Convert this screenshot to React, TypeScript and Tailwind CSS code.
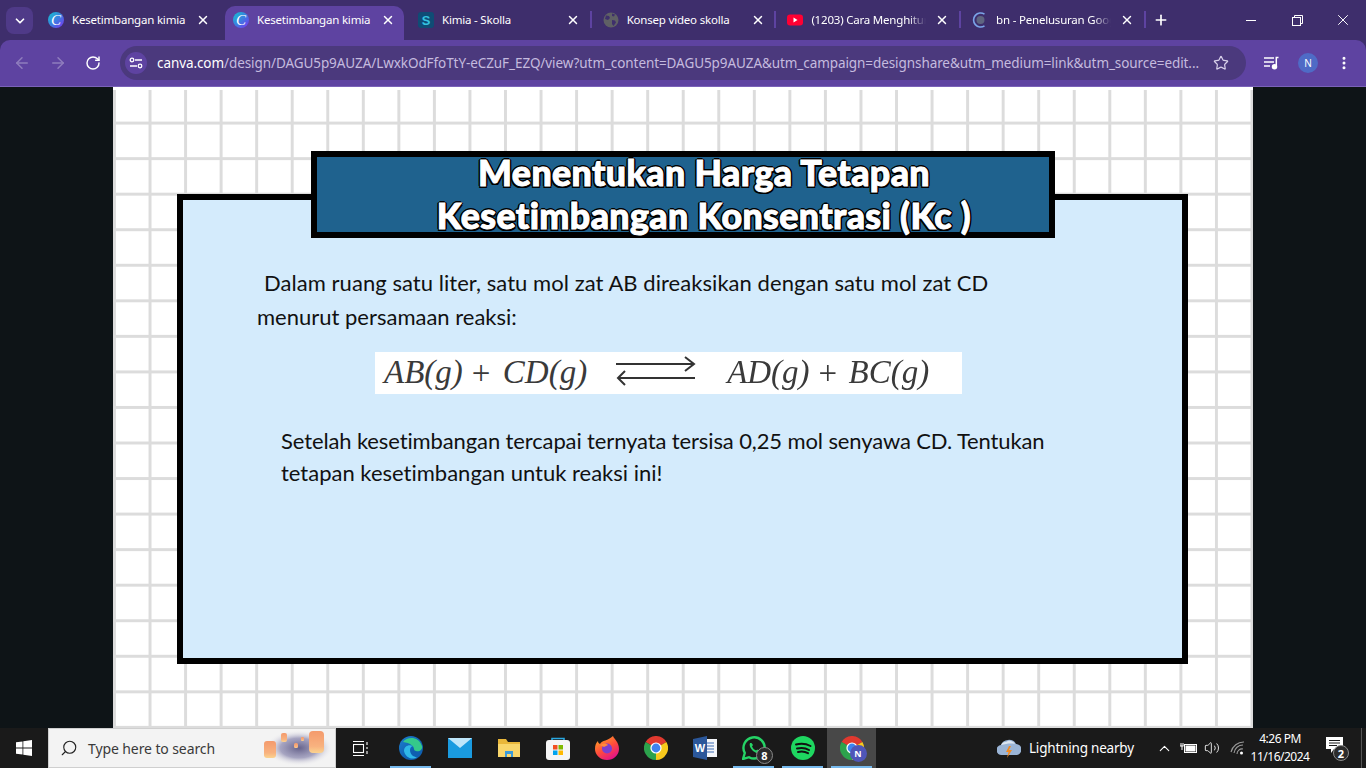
import React from "react";
import {
  ArrowLeft,
  ArrowRight,
  ChevronDown,
  ChevronUp,
  EllipsisVertical,
  Plus,
  RotateCw,
  Search,
  Star,
  Volume2,
  X,
} from "lucide-react";

const CanvaIcon = () => (
  <div className="w-4 h-4 rounded-full bg-[linear-gradient(135deg,#12c5cf,#3b7fe0_50%,#7b2ff0)] flex items-center justify-center text-white text-[15px] leading-none italic font-['Liberation_Serif',serif]">
    C
  </div>
);

const SkollaIcon = () => (
  <div className="w-4 h-4 rounded-[3px] bg-[#0f4c75] flex items-center justify-center text-[#35c3e0] text-[13px] leading-none font-bold font-['Liberation_Sans',sans-serif]">
    S
  </div>
);

const GlobeIcon = () => (
  <svg width="16" height="16" viewBox="0 0 16 16">
    <circle cx="8" cy="8" r="7.5" fill="#5f6065" />
    <path d="M3 3.5l3 .5 1 2-2 2-3-1zM9 8l3 .5 1 2-2.5 3.5-1.5-2zM9 1.5l3 1-1 2-2-.5z" fill="#3e2f6c" />
  </svg>
);

const YoutubeIcon = () => (
  <svg width="16" height="16" viewBox="0 0 16 16">
    <rect x="0" y="2.5" width="16" height="11" rx="3" fill="#ff0033" />
    <path d="M6.5 5.5l4 2.5-4 2.5z" fill="#fff" />
  </svg>
);

const LoadingGlobeIcon = () => (
  <svg width="16" height="16" viewBox="0 0 16 16" fill="none">
    <path d="M12.5 2.2A7 7 0 1 0 12.5 13.8" stroke="#7ba4e8" strokeWidth="1.6" />
    <circle cx="8.5" cy="8" r="4" fill="#5f6580" />
  </svg>
);

const tabs = [
  { title: "Kesetimbangan kimia", icon: <CanvaIcon />, kind: "first", sep: false, fade: false },
  { title: "Kesetimbangan kimia", icon: <CanvaIcon />, kind: "active", sep: false, fade: false },
  { title: "Kimia - Skolla", icon: <SkollaIcon />, kind: "normal", sep: true, fade: false },
  { title: "Konsep video skolla", icon: <GlobeIcon />, kind: "normal", sep: true, fade: false },
  { title: "(1203) Cara Menghitung", icon: <YoutubeIcon />, kind: "normal", sep: true, fade: true },
  { title: "bn - Penelusuran Google", icon: <LoadingGlobeIcon />, kind: "normal", sep: true, fade: true },
];

const TabBar = () => (
  <div className="h-10 bg-[#3e2e6c] flex items-end shrink-0">
    <div className="w-[27px] h-[27px] ml-[6px] mb-[6px] rounded-lg bg-[#4f3a88] flex items-center justify-center shrink-0">
      <ChevronDown size={14} strokeWidth={3} className="text-white" />
    </div>
    <div className="flex ml-[2px] h-[34px]">
      {tabs.map((tab, i) => (
        <div
          key={i}
          className={
            tab.kind === "active"
              ? "w-[179px] pl-2 pb-[6px] bg-[#5e43a1] rounded-t-[10px] flex items-center relative shrink-0"
              : tab.kind === "first"
                ? "w-[190px] pl-[13px] pb-[6px] flex items-center relative shrink-0"
                : "w-[184.7px] pl-[14px] pb-[6px] flex items-center relative shrink-0"
          }
        >
          <div className="w-4 h-4 shrink-0">{tab.icon}</div>
          <span
            className={`ml-[8px] w-[115px] shrink-0 overflow-hidden whitespace-nowrap text-white text-[11.5px] font-['Noto_Sans',sans-serif] tracking-[-0.2px] ${
              tab.fade ? "[mask-image:linear-gradient(90deg,#000_85%,transparent)]" : ""
            }`}
          >
            {tab.title}
          </span>
          <X size={14} strokeWidth={2.5} className="text-white ml-[9px] shrink-0" />
          {tab.sep && <div className="absolute right-[-3px] top-[5px] w-[2px] h-[17px] bg-[#5e43a1]" />}
        </div>
      ))}
    </div>
    <div className="h-[34px] pb-[6px] flex items-center ml-[10px]">
      <Plus size={16} strokeWidth={2.5} className="text-white" />
    </div>
    <div className="flex-1" />
    <div className="h-10 flex items-center text-white">
      <div className="w-[46px] flex justify-center">
        <div className="w-[10px] h-px bg-white" />
      </div>
      <div className="w-[46px] flex justify-center">
        <svg width="11" height="11" viewBox="0 0 11 11" fill="none" stroke="currentColor">
          <rect x="0.5" y="2.5" width="8" height="8" />
          <path d="M2.5 2.5v-2h8v8h-2" />
        </svg>
      </div>
      <div className="w-[46px] flex justify-center">
        <X size={18} strokeWidth={1.3} />
      </div>
    </div>
  </div>
);

const Toolbar = () => (
  <div className="h-[47px] bg-[#5e43a1] rounded-t-[10px] border-b border-[#7a62b8] flex items-center shrink-0">
    <div className="w-[120px] flex items-center pl-[13px] gap-[18px] shrink-0">
      <ArrowLeft size={18} strokeWidth={2} className="text-[#8f7dbd]" />
      <ArrowRight size={18} strokeWidth={2} className="text-[#8f7dbd]" />
      <RotateCw size={16} strokeWidth={2.2} className="text-white" />
    </div>
    <div className="w-[1126px] h-[34px] rounded-full bg-[#4b397d] flex items-center pl-[5px] pr-[17px] shrink-0">
      <div className="w-[22px] h-[22px] rounded-full bg-[#5e43a1] flex items-center justify-center shrink-0">
        <svg width="14" height="12" viewBox="0 0 14 12" fill="none" stroke="#fff" strokeWidth="1.3">
          <path d="M6 3h7M1 9h7" />
          <circle cx="3" cy="3" r="1.8" />
          <circle cx="11" cy="9" r="1.8" />
        </svg>
      </div>
      <div className="ml-[10px] w-[1046px] whitespace-nowrap text-[13.5px] font-['Noto_Sans',sans-serif] tracking-[-0.08px] text-[#c5bbdf]">
        <span className="text-white">canva.com</span>
        /design/DAGU5p9AUZA/LwxkOdFfoTtY-eCZuF_EZQ/view?utm_content=DAGU5p9AUZA&utm_campaign=designshare&utm_medium=link&utm_source=edit...
      </div>
      <Star size={16} strokeWidth={1.8} className="text-[#d8d0ea] ml-auto shrink-0" />
    </div>
    <div className="flex-1 flex items-center pl-[18px]">
      <svg width="16" height="14" viewBox="0 0 16 14" fill="none" stroke="#fff" strokeWidth="1.5">
        <path d="M0 2h10M0 6h10M0 10h6" />
        <path d="M14.5 1.5h-2.200v9" />
        <circle cx="10.5" cy="10.8" r="2" fill="#fff" />
      </svg>
      <div className="ml-[18px] w-5 h-5 rounded-full bg-[#4f6bc6] flex items-center justify-center text-white text-[10px] font-['Noto_Sans',sans-serif]">
        N
      </div>
      <EllipsisVertical size={16} strokeWidth={2.5} className="text-white ml-[18px]" />
    </div>
  </div>
);

const Slide = () => (
  <div className="flex-1 h-full bg-white border-t-[3px] border-white bg-[linear-gradient(90deg,#dcdcdc_3px,transparent_3px),linear-gradient(180deg,transparent_32px,#dcdcdc_32px,#dcdcdc_35px,transparent_35px)] bg-size-[35.55px_35.55px] flex flex-col">
    <div className="relative z-10 self-center mt-[61px] w-[744px] h-[87px] border-[6px] border-black bg-[#1f628e] flex flex-col items-center justify-center pl-[42px] pb-[2px] font-['Lato',sans-serif] font-black text-white text-[35.7px] leading-[43px] tracking-[0.4px] [-webkit-text-stroke:1px_white] [text-shadow:2px_0_0_#000,-2px_0_0_#000,0_2px_0_#000,0_-2px_0_#000,1.5px_1.5px_0_#000,-1.5px_1.5px_0_#000,1.5px_-1.5px_0_#000,-1.5px_-1.5px_0_#000] whitespace-nowrap">
      <div>Menentukan Harga Tetapan</div>
      <div>Kesetimbangan Konsentrasi (Kc )</div>
    </div>
    <div className="mt-[-44px] ml-[64px] w-[1011px] h-[470px] border-[6px] border-black bg-[#d4ebfc] shrink-0 font-['Lato',sans-serif] text-[22px] text-[#111] [font-variant-ligatures:none]">
      <div className="mt-[66px] ml-[74px] w-[760px] leading-[34px] whitespace-nowrap">
        <div className="pl-[7px] tracking-[0.05px]">Dalam ruang satu liter, satu mol zat AB direaksikan dengan satu mol zat CD</div>
        <div>menurut persamaan reaksi:</div>
      </div>
      <div className="mt-[18px] ml-[192px] w-[587px] h-[42px] bg-white flex items-center pl-[9px] font-['Liberation_Serif',serif] italic text-[33px] text-[#3a3a3a] blur-[0.5px] whitespace-nowrap">
        <span>AB(g)</span>
        <span className="not-italic ml-[9px] w-[18px] text-center text-[33px] leading-none">+</span>
        <span className="ml-[13px]">CD(g)</span>
        <svg className="ml-[29px] mt-[-5px] shrink-0" width="80" height="30" viewBox="0 0 80 30" fill="none" stroke="#333" strokeWidth="2">
          <path d="M0 8h78M69 1l9 7-9 7" />
          <path d="M79 22H2M9 15l-7 7 7 7" />
        </svg>
        <span className="ml-[31px]">AD(g)</span>
        <span className="not-italic ml-[9px] w-[18px] text-center text-[33px] leading-none">+</span>
        <span className="ml-[12px]">BC(g)</span>
      </div>
      <div className="mt-[31px] ml-[98px] w-[800px] leading-[32px] whitespace-nowrap">
        <div className="tracking-[-0.12px]">Setelah kesetimbangan tercapai ternyata tersisa 0,25 mol senyawa CD. Tentukan</div>
        <div>tetapan kesetimbangan untuk reaksi ini!</div>
      </div>
    </div>
  </div>
);

const ChromeLogo = ({ size = 24 }: { size?: number }) => (
  <svg width={size} height={size} viewBox="0 0 24 24">
    <path d="M12 12L1.6 6A12 12 0 0 1 22.4 6Z" fill="#e0392f" />
    <path d="M12 12L22.4 6A12 12 0 0 1 12 24Z" fill="#f8c91c" />
    <path d="M12 12L12 24A12 12 0 0 1 1.6 6Z" fill="#2ca24c" />
    <circle cx="12" cy="12" r="5.6" fill="#fff" />
    <circle cx="12" cy="12" r="4.4" fill="#3f83ee" />
  </svg>
);

const TaskSlot = ({
  children,
  underline,
  active,
  className,
}: {
  children: React.ReactNode;
  underline?: boolean;
  active?: boolean;
  className?: string;
}) => (
  <div className={`relative w-[49px] h-10 flex items-center justify-center shrink-0 ${active ? "bg-[#484848]" : ""} ${className ?? ""}`}>
    {children}
    {underline && <div className="absolute bottom-0 left-1 right-1 h-[2px] bg-[#76b9ed]" />}
  </div>
);

const Taskbar = () => (
  <div className="h-10 bg-[#1a1a1a] flex items-center shrink-0 font-['Noto_Sans',sans-serif] text-white">
    <div className="w-12 flex justify-center shrink-0">
      <svg width="16" height="16" viewBox="0 0 16 16" fill="#fff">
        <path d="M0 2.3l6.5-.9v6.2H0zM7.300 1.300L16 0v7.600H7.300zM0 8.400h6.500v6.200L0 13.700zM7.300 8.400H16V16l-8.700-1.200z" />
      </svg>
    </div>
    <div className="w-[288px] h-10 bg-[#f3f3f3] border border-[#cfcfcf] flex items-center relative shrink-0">
      <Search size={18} strokeWidth={1.5} className="text-[#222] ml-[11px] -scale-x-100" />
      <span className="ml-[10px] text-[14px] text-[#3a3a3a] tracking-[-0.1px]">Type here to search</span>
      <svg className="absolute right-[2px] top-[1px]" width="70" height="36" viewBox="0 0 70 36">
        <defs>
          <radialGradient id="haze">
            <stop offset="0%" stopColor="#56527f" stopOpacity="0.9" />
            <stop offset="55%" stopColor="#7d7aa6" stopOpacity="0.65" />
            <stop offset="100%" stopColor="#f3f3f3" stopOpacity="0" />
          </radialGradient>
          <linearGradient id="lantern" x1="0" y1="0" x2="0" y2="1">
            <stop offset="0%" stopColor="#f49a6c" />
            <stop offset="70%" stopColor="#f8b27f" />
            <stop offset="100%" stopColor="#fbd38f" />
          </linearGradient>
          <filter id="soft">
            <feGaussianBlur stdDeviation="0.5" />
          </filter>
        </defs>
        <ellipse cx="36" cy="18" rx="34" ry="18" fill="url(#haze)" />
        <g filter="url(#soft)" fill="url(#lantern)">
          <rect x="1" y="11" width="12" height="17" rx="3" />
          <rect x="18" y="3" width="6" height="9" rx="2" />
          <rect x="31" y="13" width="4" height="5" rx="1.500" />
          <rect x="38" y="7" width="3" height="4" rx="1" />
          <rect x="46" y="1" width="15" height="22" rx="4" />
        </g>
      </svg>
    </div>
    <div className="w-[49px] flex justify-center shrink-0">
      <svg width="16" height="15" viewBox="0 0 16 15" fill="none" stroke="#fff" strokeWidth="1.1">
        <rect x="0.5" y="3.5" width="10" height="8" />
        <path d="M0 0.500h11M0 14.500h11M14 1v3M14 6v2M14 10v3" />
      </svg>
    </div>
    <TaskSlot underline className="ml-[1px]">
      <svg width="24" height="24" viewBox="0 0 24 24">
        <defs>
          <linearGradient id="edge" x1="0" y1="0" x2="1" y2="1">
            <stop offset="0%" stopColor="#1d7fd0" />
            <stop offset="60%" stopColor="#0f5fb0" />
          </linearGradient>
        </defs>
        <circle cx="12" cy="12" r="12" fill="url(#edge)" />
        <path d="M4 6c4-6 16-6 19 4 1 4-3 6-6 5-1 0-2-1-2-2 0-3-4-6-11-7z" fill="#35c98a" />
        <path d="M5 15c0-5 5-7 9-5-4 1-4 7 0 10 2 1 3 1 4 1-5 4-12 0-13-6z" fill="#2fb7e8" />
      </svg>
    </TaskSlot>
    <TaskSlot>
      <svg width="24" height="20" viewBox="0 0 24 20">
        <rect width="24" height="20" fill="#1a9be0" />
        <path d="M0 0l12 10L24 0z" fill="#bfe6fa" />
      </svg>
    </TaskSlot>
    <TaskSlot>
      <svg width="22" height="18" viewBox="0 0 22 18">
        <path d="M0 0h8l2 3h12v15H0z" fill="#e9b73a" />
        <path d="M0 5h22v13H0z" fill="#f9d66b" />
        <path d="M7 18v-6h8v6h-2v-3H9v3z" fill="#3b9ad9" />
      </svg>
    </TaskSlot>
    <TaskSlot>
      <svg width="24" height="24" viewBox="0 0 24 24">
        <path d="M6 5V2.500h12V5" fill="none" stroke="#2aa7e0" strokeWidth="1.6" />
        <rect y="4" width="24" height="20" rx="3" fill="#f5f5f5" />
        <rect x="7" y="9" width="4.500" height="4.500" fill="#f25022" />
        <rect x="12.500" y="9" width="4.500" height="4.500" fill="#7fba00" />
        <rect x="7" y="14.500" width="4.500" height="4.500" fill="#00a4ef" />
        <rect x="12.500" y="14.500" width="4.500" height="4.500" fill="#ffb900" />
      </svg>
    </TaskSlot>
    <TaskSlot>
      <svg width="24" height="24" viewBox="0 0 24 24">
        <defs>
          <linearGradient id="fox" x1="0" y1="0" x2="0.6" y2="1">
            <stop offset="0%" stopColor="#ffb321" />
            <stop offset="60%" stopColor="#ff4a3c" />
            <stop offset="100%" stopColor="#e31587" />
          </linearGradient>
        </defs>
        <path d="M18 0c1 3 6 6 6 13a12 11 0 0 1-24 0c0-4 1-6 3-8 0 2 1 2 2 3 2-4 8-3 13-8z" fill="url(#fox)" />
        <circle cx="12" cy="12.500" r="5" fill="#7b3fd0" />
        <path d="M5 9c3-2 6-2 8 0l-4 2z" fill="#ff8a3c" />
      </svg>
    </TaskSlot>
    <TaskSlot>
      <ChromeLogo />
    </TaskSlot>
    <TaskSlot>
      <svg width="24" height="24" viewBox="0 0 24 24">
        <rect x="9" y="3" width="15" height="18" fill="#f4f6fa" />
        <path d="M12 7h9M12 10h9M12 13h9M12 16h9" stroke="#3d6db5" />
        <path d="M0 3l14-3v24L0 21z" fill="#2b579a" />
        <text x="7" y="16" textAnchor="middle" fontSize="11" fontWeight="700" fill="#fff" fontFamily="Liberation Sans, sans-serif">W</text>
      </svg>
    </TaskSlot>
    <TaskSlot underline>
      <svg width="24" height="24" viewBox="0 0 24 24" fill="none">
        <path d="M1 23l1.800-6A10.600 10.600 0 1 1 7 21.200z" stroke="#25d366" strokeWidth="2.4" />
        <path d="M8 7c-1 2 0 5 3 8 3 2 5 3 7 1l-2.500-2.500-1.500 1c-2-1-3-2-4-4l1-1.500L9.500 7z" fill="#25d366" />
      </svg>
      <div className="absolute left-[27px] top-[19px] w-[17px] h-[17px] rounded-full bg-[#2b2b2b] border border-[#8a8a8a] flex items-center justify-center text-[11px] font-bold leading-none">
        8
      </div>
    </TaskSlot>
    <TaskSlot underline>
      <svg width="24" height="24" viewBox="0 0 24 24" fill="none">
        <circle cx="12" cy="12" r="12" fill="#1ed760" />
        <path d="M5 8.500c5-1.500 10-1 14.500 1.500M6 12.500c4-1 8.500-.7 12 1.500M7 16c3.500-.8 7-.5 10 1.200" stroke="#111" strokeWidth="2" strokeLinecap="round" />
      </svg>
    </TaskSlot>
    <TaskSlot underline active>
      <div className="relative w-6 h-6">
        <ChromeLogo />
        <div className="absolute left-[10px] top-[9px] w-[17px] h-[17px] rounded-full bg-[#4f56b8] flex items-center justify-center text-[9px] font-bold">
          N
        </div>
      </div>
    </TaskSlot>
    <div className="flex-1" />
    <div className="flex items-center shrink-0 pr-[4px]">
      <svg width="24" height="22" viewBox="0 0 24 22">
        <path d="M5 18a5 5 0 0 1-1-10 8 7 0 0 1 15-1 5.500 5.500 0 0 1 0 11z" fill="#9ab4d6" />
        <path d="M4 8a5 5 0 0 1 5-3 6 6 0 0 1 9 2c-5-1-9 0-14 1z" fill="#dce6f2" />
        <path d="M12 9l-3 6h2.500L10 21l5-8h-3l2-4z" fill="#f08a24" />
      </svg>
      <span className="ml-[8px] text-[13.5px] tracking-[-0.2px] w-[105px] whitespace-nowrap">Lightning nearby</span>
      <ChevronUp size={17} strokeWidth={1.5} className="ml-[22px]" />
      <svg className="ml-[7px]" width="17" height="12" viewBox="0 0 17 12" fill="none" stroke="#fff">
        <rect x="4.500" y="2.500" width="12" height="8" />
        <rect x="6" y="4" width="9" height="5" fill="#fff" />
        <path d="M0 4h3.500M1 1v3M3 1v3M2 4v4" />
      </svg>
      <Volume2 size={16} strokeWidth={1.3} className="ml-[7px]" />
      <svg className="ml-[10px]" width="16" height="16" viewBox="0 0 16 16" fill="none" stroke="#9a9a9a" strokeWidth="1.1">
        <path d="M1 12a13 13 0 0 1 13-10M4 13a9 9 0 0 1 9-8M7 14a5 5 0 0 1 6-5" />
        <circle cx="11.500" cy="13" r="1.500" fill="#fff" stroke="none" />
      </svg>
      <div className="ml-[1px] w-[66px] flex flex-col items-center text-xs tracking-[-0.5px] leading-[18px] whitespace-nowrap">
        <span>4:26 PM</span>
        <span>11/16/2024</span>
      </div>
      <div className="relative ml-[13px] w-[21px] h-[40px] flex items-center">
        <svg className="mt-[-6px]" width="17" height="16" viewBox="0 0 17 16" fill="#fff">
          <path d="M0 0h17v12H8l-3 4v-4H0z" />
          <path d="M3 3.500h11M3 6h11M3 8.500h8" stroke="#1a1a1a" />
        </svg>
        <div className="absolute left-[7px] top-[17px] w-[16px] h-[16px] rounded-full bg-[#2b2b2b] border border-[#8a8a8a] flex items-center justify-center text-[11px] font-bold leading-none">
          2
        </div>
      </div>
      <div className="ml-[14px] w-px h-10 bg-[#555]" />
    </div>
  </div>
);

const App: React.FC = () => {
  return (
    <div className="w-[1366px] h-[768px] overflow-hidden flex flex-col bg-[#3e2e6c]">
      <TabBar />
      <Toolbar />
      <div className="flex-1 min-h-0 flex bg-[#0e1417]">
        <div className="w-[113px] shrink-0" />
        <Slide />
        <div className="w-[113px] shrink-0" />
      </div>
      <Taskbar />
    </div>
  );
};

export default App;
